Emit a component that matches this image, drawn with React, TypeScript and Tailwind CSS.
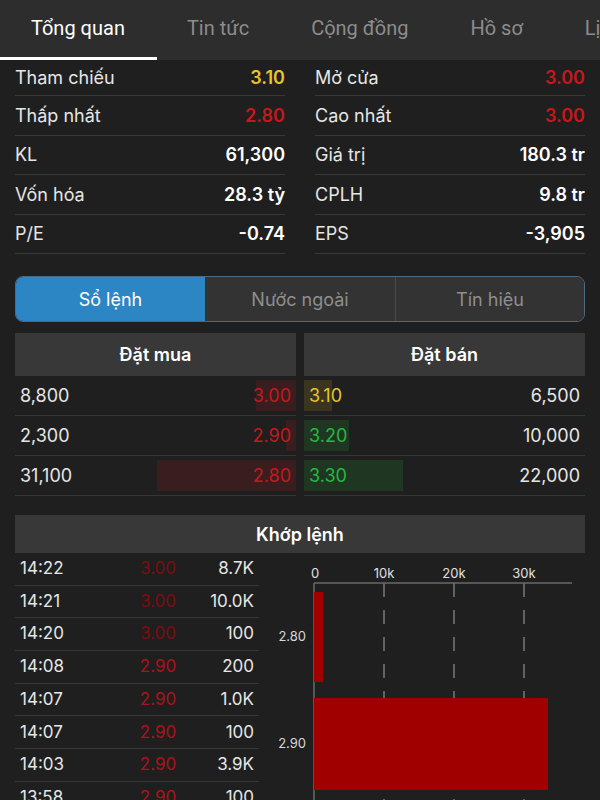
import React from 'react';

const tabs = ['Tổng quan', 'Tin tức', 'Cộng đồng', 'Hồ sơ', 'Lịch sử'];

const leftStats = [
  { label: 'Tham chiếu', value: '3.10', color: 'text-[#e8c42c]' },
  { label: 'Thấp nhất', value: '2.80', color: 'text-[#c8171c]' },
  { label: 'KL', value: '61,300', color: 'text-white' },
  { label: 'Vốn hóa', value: '28.3 tỷ', color: 'text-white' },
  { label: 'P/E', value: '-0.74', color: 'text-white' },
];

const rightStats = [
  { label: 'Mở cửa', value: '3.00', color: 'text-[#c8171c]' },
  { label: 'Cao nhất', value: '3.00', color: 'text-[#c8171c]' },
  { label: 'Giá trị', value: '180.3 tr', color: 'text-white' },
  { label: 'CPLH', value: '9.8 tr', color: 'text-white' },
  { label: 'EPS', value: '-3,905', color: 'text-white' },
];

const bids = [
  { qty: '8,800', price: '3.00', bar: 40 },
  { qty: '2,300', price: '2.90', bar: 10 },
  { qty: '31,100', price: '2.80', bar: 139 },
];

const asks = [
  { price: '3.10', qty: '6,500', bar: 28, color: 'text-[#e8c42c]', bg: 'bg-[#3b3520]' },
  { price: '3.20', qty: '10,000', bar: 45, color: 'text-[#25b83c]', bg: 'bg-[#1f3622]' },
  { price: '3.30', qty: '22,000', bar: 99, color: 'text-[#25b83c]', bg: 'bg-[#1f3622]' },
];

const trades = [
  { time: '14:22', price: '3.00', vol: '8.7K', dim: true },
  { time: '14:21', price: '3.00', vol: '10.0K', dim: true },
  { time: '14:20', price: '3.00', vol: '100', dim: true },
  { time: '14:08', price: '2.90', vol: '200', dim: false },
  { time: '14:07', price: '2.90', vol: '1.0K', dim: false },
  { time: '14:07', price: '2.90', vol: '100', dim: false },
  { time: '14:03', price: '2.90', vol: '3.9K', dim: false },
  { time: '13:58', price: '2.90', vol: '100', dim: false },
];

function StatRow({ label, value, color, first }: { label: string; value: string; color: string; first?: boolean }) {
  return (
    <div className={`flex items-center justify-between border-b border-[#393939] ${first ? 'h-[36px]' : 'h-[39.5px]'}`}>
      <span className="text-[18px] text-[#e6e6e6]">{label}</span>
      <span className={`text-[18px] font-semibold ${color}`}>{value}</span>
    </div>
  );
}

function VolumeChart() {
  const grid = [125, 195, 265];
  return (
    <svg width="326" height="247" className="block">
      <g fill="#e0e0e0" fontSize="13" fontFamily="Inter, sans-serif" textAnchor="middle">
        <text x="56" y="25">0</text>
        <text x="125" y="25">10k</text>
        <text x="195" y="25">20k</text>
        <text x="265" y="25">30k</text>
      </g>
      {grid.map((x) => (
        <line key={x} x1={x} y1="30" x2={x} y2="247" stroke="#7a7a7a" strokeWidth="1.5" strokeDasharray="14 13" />
      ))}
      <line x1="55" y1="30" x2="313" y2="30" stroke="#6a6a6a" strokeWidth="1.5" />
      <line x1="55" y1="30" x2="55" y2="247" stroke="#6a6a6a" strokeWidth="1.5" />
      <rect x="55" y="39" width="9" height="90" fill="#a00000" />
      <rect x="55" y="145" width="234" height="92" fill="#a00000" />
      <g fill="#d8d8d8" fontSize="13" fontFamily="Inter, sans-serif" textAnchor="end">
        <text x="47" y="88">2.80</text>
        <text x="47" y="195">2.90</text>
      </g>
    </svg>
  );
}

export default function App() {
  return (
    <div className="w-[600px] h-[800px] overflow-hidden bg-[#1f1f1f] font-['Inter',sans-serif]">
      {/* Top tabs */}
      <div className="relative h-[60px] bg-[#2d2d2d] flex items-center whitespace-nowrap overflow-hidden font-['Roboto',sans-serif]">
        {tabs.map((t, i) => (
          <div
            key={t}
            className={`shrink-0 px-[31px] pb-[5px] text-[20px] ${i === 0 ? 'text-white' : 'text-[#8c8c8c]'}`}
          >
            {t}
          </div>
        ))}
        <div className="absolute left-0 bottom-0 h-[3px] w-[157px] bg-white" />
      </div>

      {/* Stats */}
      <div className="grid grid-cols-2 gap-[30px] px-[15px]">
        <div>
          {leftStats.map((s, i) => (
            <StatRow key={s.label} {...s} first={i === 0} />
          ))}
        </div>
        <div>
          {rightStats.map((s, i) => (
            <StatRow key={s.label} {...s} first={i === 0} />
          ))}
        </div>
      </div>

      {/* Segmented control */}
      <div className="mx-[15px] mt-[22px] h-[46px] flex rounded-[8px] border border-[#4d6a82] overflow-hidden text-[18px]">
        <div className="w-[189px] bg-[#2d86c4] text-white flex items-center justify-center">Sổ lệnh</div>
        <div className="w-[191px] bg-[#333333] text-[#8e8e8e] flex items-center justify-center border-r border-[#4a4a4a]">Nước ngoài</div>
        <div className="flex-1 bg-[#333333] text-[#8e8e8e] flex items-center justify-center">Tín hiệu</div>
      </div>

      {/* Order book */}
      <div className="mx-[15px] mt-[11px] grid grid-cols-2 gap-[8px]">
        <div>
          <div className="h-[43px] bg-[#383838] flex items-center justify-center text-[18px] font-semibold text-white">Đặt mua</div>
          {bids.map((b) => (
            <div key={b.price} className="relative h-[40px] flex items-center justify-between pl-[5px] pr-[5px] border-b border-[#363636]">
              <div className="absolute right-0 top-[4px] bottom-[4px] bg-[#3a1e1f]" style={{ width: b.bar }} />
              <span className="relative text-[18px] text-[#e6e6e6]">{b.qty}</span>
              <span className="relative text-[18px] text-[#c8171c]">{b.price}</span>
            </div>
          ))}
        </div>
        <div>
          <div className="h-[43px] bg-[#383838] flex items-center justify-center text-[18px] font-semibold text-white">Đặt bán</div>
          {asks.map((a) => (
            <div key={a.price} className="relative h-[40px] flex items-center justify-between pl-[5px] pr-[5px] border-b border-[#363636]">
              <div className={`absolute left-0 top-[4px] bottom-[4px] ${a.bg}`} style={{ width: a.bar }} />
              <span className={`relative text-[18px] ${a.color}`}>{a.price}</span>
              <span className="relative text-[18px] text-[#e6e6e6]">{a.qty}</span>
            </div>
          ))}
        </div>
      </div>

      {/* Matched orders */}
      <div className="mx-[15px] mt-[19px]">
        <div className="h-[38px] bg-[#383838] flex items-center justify-center text-[18px] font-semibold text-white">Khớp lệnh</div>
        <div className="flex">
          <div className="w-[244px] shrink-0">
            {trades.map((t, i) => (
              <div key={i} className="h-[32.7px] grid grid-cols-[105px_66px_1fr] items-center px-[5px] border-b border-[#363636] text-[17px]">
                <span className="text-[#e6e6e6]">{t.time}</span>
                <span className={`text-center ${t.dim ? 'text-[#7d0d0f]' : 'text-[#a8141a]'}`}>{t.price}</span>
                <span className="text-right text-[#e6e6e6]">{t.vol}</span>
              </div>
            ))}
          </div>
          <VolumeChart />
        </div>
      </div>
    </div>
  );
}
